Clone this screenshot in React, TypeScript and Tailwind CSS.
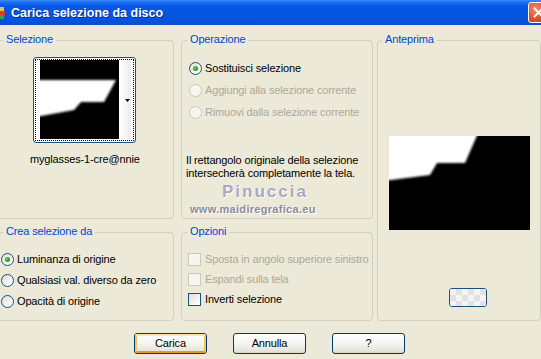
import React from "react";

function Group({
  label,
  className,
  labelLeft = "left-[5px]",
  children,
}: {
  label: string;
  className: string;
  labelLeft?: string;
  children?: React.ReactNode;
}) {
  return (
    <div className={`relative rounded-[4px] border border-[#d0d0bf] ${className}`}>
      <span
        className={`absolute -top-[8px] ${labelLeft} bg-[#ece9d8] px-[3px] text-[11px] leading-[13px] text-[#0046d5]`}
      >
        {label}
      </span>
      {children}
    </div>
  );
}

function Radio({ checked, disabled, label }: { checked?: boolean; disabled?: boolean; label: string }) {
  return (
    <div className="flex h-[13px] items-center">
      <span
        className={`flex h-[13px] w-[13px] shrink-0 items-center justify-center rounded-full border ${
          disabled
            ? "border-[#cac8bb] bg-[#f6f5ee]"
            : "border-[#1c5180] bg-[linear-gradient(135deg,#dcdcd5_0%,#f4f4f0_60%,#ffffff_100%)]"
        }`}
      >
        {checked && (
          <span className="h-[5px] w-[5px] rounded-full bg-[radial-gradient(circle_at_40%_40%,#60d060_0%,#21a121_60%,#1a8a1a_100%)]" />
        )}
      </span>
      <span
        className={`ml-[3px] whitespace-nowrap text-[11px] leading-[13px] ${
          disabled ? "text-[#aca899]" : "text-black"
        }`}
      >
        {label}
      </span>
    </div>
  );
}

function Check({ disabled, label }: { disabled?: boolean; label: string }) {
  return (
    <div className="flex h-[13px] items-center">
      <span
        className={`h-[13px] w-[13px] shrink-0 border ${
          disabled
            ? "border-[#cac8bb] bg-[#f6f5ee]"
            : "border-[#1c5180] bg-[linear-gradient(135deg,#dcdcd5_0%,#f4f4f0_60%,#ffffff_100%)]"
        }`}
      />
      <span
        className={`ml-[4px] whitespace-nowrap text-[11px] leading-[13px] ${
          disabled ? "text-[#aca899]" : "text-black"
        }`}
      >
        {label}
      </span>
    </div>
  );
}

function XpButton({ label, isDefault }: { label: string; isDefault?: boolean }) {
  return (
    <button
      type="button"
      className="flex h-[21px] w-[73px] items-center justify-center rounded-[3px] border border-[#003c74] bg-[linear-gradient(to_bottom,#ffffff_0%,#f4f4f0_50%,#e6e5dc_90%,#d6d0c5_100%)] p-0"
    >
      <span
        className={`flex h-full w-full items-center justify-center rounded-[2px] text-[11px] leading-[13px] text-black ${
          isDefault ? "border-2 border-[#f7c45f] border-t-[#ffe6a8] border-b-[#e5972c]" : ""
        }`}
      >
        {label}
      </span>
    </button>
  );
}

export default function App(): React.ReactElement {
  return (
    <div className="h-[359px] w-[541px] overflow-hidden bg-[#ece9d8] font-['Liberation_Sans',Arial,sans-serif] tracking-[-0.15px]">
      {/* title bar */}
      <div className="flex h-[25px] items-center overflow-hidden bg-[linear-gradient(to_bottom,#3c8cf8_0%,#1a6ef2_10%,#0758e6_25%,#0553e1_70%,#0a4fd4_100%)]">
        <svg width="6" height="16" viewBox="0 0 6 16" className="shrink-0">
          <rect x="0" y="2" width="4" height="4" fill="#e8c040" />
          <rect x="0" y="6" width="5" height="4" fill="#d04030" />
          <rect x="0" y="10" width="4" height="4" fill="#40a040" />
        </svg>
        <span className="ml-[5px] mt-[1px] whitespace-nowrap text-[12.5px] font-bold leading-[15px] tracking-normal text-white [text-shadow:1px_1px_0_#0a2c8c]">
          Carica selezione da disco
        </span>
        <div className="ml-auto -mr-[8px] flex h-[21px] w-[21px] shrink-0 items-center justify-center rounded-[3px] border border-white bg-[radial-gradient(circle_at_35%_30%,#f0896a_0%,#e0512e_55%,#c4361a_100%)]">
          <svg width="11" height="11" viewBox="0 0 11 11">
            <path d="M1.5 1.5 L9.5 9.5 M9.5 1.5 L1.5 9.5" stroke="white" strokeWidth="2" strokeLinecap="square" />
          </svg>
        </div>
      </div>

      {/* groups */}
      <div className="-ml-[3px] flex pt-[15px]">
        <div className="flex w-[177px] flex-col gap-[13px]">
          <Group label="Selezione" className="h-[179px]" labelLeft="left-[5px]">
            <div className="flex flex-col items-start pl-[32px] pt-[16px]">
              <div className="flex flex-col items-center">
                <div className="h-[86px] w-[103px] rounded-[3px] border border-[#1c5180] bg-white p-[1px]">
                  <div className="flex h-full w-full border border-dotted border-black pl-[4px]">
                    <svg width="79" height="79" viewBox="0 0 79 79" className="shrink-0">
                      <defs>
                        <filter id="blurA" x="-10%" y="-10%" width="120%" height="120%">
                          <feGaussianBlur stdDeviation="1" />
                        </filter>
                      </defs>
                      <rect width="79" height="79" fill="black" />
                      <polygon
                        points="-5,20 76,20 64,42 41,42 34,50 -5,57"
                        fill="white"
                        filter="url(#blurA)"
                      />
                    </svg>
                    <div className="relative flex h-[79px] w-[12px] items-center justify-end bg-[linear-gradient(to_right,#ffffff,#ececec)]">
                      <svg width="5" height="4" viewBox="0 0 5 4" className="mr-[1px] mt-[3px]">
                        <polygon points="0,0 5,0 2.5,3" fill="black" />
                      </svg>
                    </div>
                  </div>
                </div>
                <div className="mt-[10px] whitespace-nowrap text-[11px] leading-[13px] text-black">
                  myglasses-1-cre@nnie
                </div>
              </div>
            </div>
          </Group>
          <Group label="Crea selezione da" className="h-[89px]">
            <div className="flex flex-col gap-[8px] pl-[3px] pt-[20px]">
              <Radio checked label="Luminanza di origine" />
              <Radio label="Qualsiasi val. diverso da zero" />
              <Radio label="Opacità di origine" />
            </div>
          </Group>
        </div>

        <div className="ml-[7px] flex w-[192px] flex-col gap-[13px]">
          <Group label="Operazione" className="h-[179px]">
            <div className="flex flex-col gap-[9px] pl-[7px] pt-[21px]">
              <Radio checked label="Sostituisci selezione" />
              <Radio disabled label="Aggiungi alla selezione corrente" />
              <Radio disabled label="Rimuovi dalla selezione corrente" />
            </div>
            <div className="mt-[35px] pl-[4px] text-[11px] leading-[13px] text-black">
              <div className="whitespace-nowrap">Il rettangolo originale della selezione</div>
              <div className="whitespace-nowrap">intersecherà completamente la tela.</div>
            </div>
            <div className="mt-[4px] flex flex-col items-start">
              <div className="ml-[40px] text-[17px] font-bold leading-[16px] tracking-[2px] text-[#a9a7c2] [text-shadow:0_0_1px_#ffffff,1px_1px_0_#ffffff]">
                Pinuccia
              </div>
              <div className="ml-[8px] mt-[3px] whitespace-nowrap text-[11px] font-bold leading-[12px] tracking-[0.3px] text-[#8d8c9c] [text-shadow:1px_1px_0_#ffffff]">
                www.maidiregrafica.eu
              </div>
            </div>
          </Group>
          <Group label="Opzioni" className="h-[89px]">
            <div className="flex flex-col gap-[7px] pl-[6px] pt-[20px]">
              <Check disabled label="Sposta in angolo superiore sinistro" />
              <Check disabled label="Espandi sulla tela" />
              <Check label="Inverti selezione" />
            </div>
          </Group>
        </div>

        <Group label="Anteprima" className="ml-[4px] h-[281px] w-[164px]" labelLeft="left-[4px]">
          <div className="pl-[11px] pt-[95px]">
            <svg width="141" height="94" viewBox="0 0 141 94">
              <defs>
                <filter id="blurB" x="-10%" y="-10%" width="120%" height="120%">
                  <feGaussianBlur stdDeviation="1.3" />
                </filter>
              </defs>
              <rect width="141" height="94" fill="black" />
              <polygon points="-5,-5 90,-5 76,27 48,27 41,39 -5,45" fill="white" filter="url(#blurB)" />
            </svg>
          </div>
          <div className="mt-[58px] pl-[71px]">
            <div className="h-[19px] w-[38px] overflow-hidden rounded-[3px] border border-[#1c5180]">
              <svg width="36" height="17" viewBox="0 0 36 17">
                <rect width="36" height="17" fill="#f4f4f4" />
                <rect x="6" y="0" width="6" height="6" fill="#e2e2e2" />
                <rect x="18" y="0" width="6" height="6" fill="#e2e2e2" />
                <rect x="30" y="0" width="6" height="6" fill="#e2e2e2" />
                <rect x="0" y="6" width="6" height="6" fill="#e2e2e2" />
                <rect x="12" y="6" width="6" height="6" fill="#e2e2e2" />
                <rect x="24" y="6" width="6" height="6" fill="#e2e2e2" />
                <rect x="6" y="12" width="6" height="6" fill="#e2e2e2" />
                <rect x="18" y="12" width="6" height="6" fill="#e2e2e2" />
                <rect x="30" y="12" width="6" height="6" fill="#e2e2e2" />
              </svg>
            </div>
          </div>
        </Group>
      </div>

      {/* buttons */}
      <div className="flex gap-[26px] pl-[134px] pt-[12px]">
        <XpButton label="Carica" isDefault />
        <XpButton label="Annulla" />
        <XpButton label="?" />
      </div>
    </div>
  );
}
